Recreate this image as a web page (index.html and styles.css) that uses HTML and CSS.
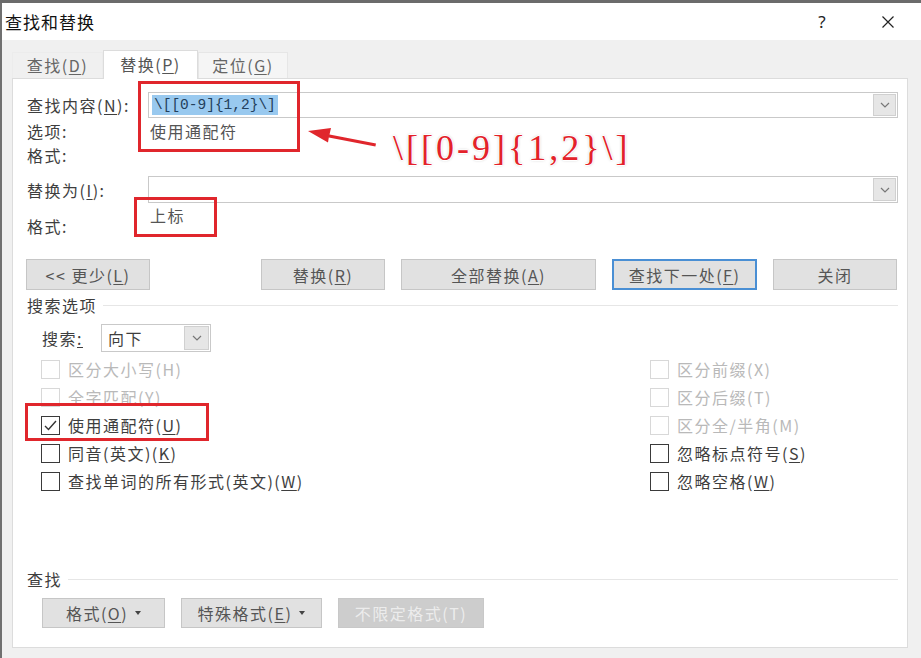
FILE: index.html
```html
<!DOCTYPE html>
<html lang="zh-CN">
<head>
    <meta charset="UTF-8">
    <meta name="viewport" content="width=device-width, initial-scale=1.0">
    <title>查找和替换</title>
    <link rel="stylesheet" href="styles.css">
</head>
<body>
    <div class="topbar"></div>
    <div class="window">
        <div class="titlebar">
            <span class="title">查找和替换</span>
            <span class="ctrl">?</span>
            <span class="ctrl">
                <svg width="12" height="12" viewBox="0 0 12 12"><path d="M0.5 0.5 L11.5 11.5 M11.5 0.5 L0.5 11.5" stroke="#222" stroke-width="1.2" fill="none"/></svg>
            </span>
        </div>

        <div class="client">
            <div class="tabs">
                <div class="tab tab-find">查找(<u>D</u>)</div>
                <div class="tab active tab-replace">替换(<u>P</u>)</div>
                <div class="tab tab-goto">定位(<u>G</u>)</div>
            </div>

            <div class="panel">
                <div class="field-row">
                    <label class="field-label">查找内容(<u>N</u>):</label>
                    <div class="combo">
                        <span class="combo-text"><span class="selected">\[[0-9]{1,2}\]</span></span>
                        <span class="combo-btn"><svg width="10" height="6" viewBox="0 0 10 6"><path d="M1 1 L5 5 L9 1" stroke="#777" stroke-width="1.2" fill="none"/></svg></span>
                    </div>
                </div>
                <div class="info-row first"><span class="field-label">选项:</span><span class="info-value">使用通配符</span></div>
                <div class="info-row"><span class="field-label">格式:</span></div>

                <div class="field-row replace">
                    <label class="field-label">替换为(<u>I</u>):</label>
                    <div class="combo">
                        <span class="combo-text"></span>
                        <span class="combo-btn"><svg width="10" height="6" viewBox="0 0 10 6"><path d="M1 1 L5 5 L9 1" stroke="#777" stroke-width="1.2" fill="none"/></svg></span>
                    </div>
                </div>
                <div class="format-row"><span class="field-label">格式:</span><span class="info-value">上标</span></div>

                <div class="actions">
                    <div class="btn less"><span>&lt;&lt; 更少(<u>L</u>)</span></div>
                    <div class="btn w-replace"><span>替换(<u>R</u>)</span></div>
                    <div class="btn w-all"><span>全部替换(<u>A</u>)</span></div>
                    <div class="btn w-next default"><span>查找下一处(<u>F</u>)</span></div>
                    <div class="btn w-close"><span>关闭</span></div>
                </div>

                <div class="group-head">搜索选项</div>

                <div class="search-row">
                    <span class="search-label">搜索<u>:</u></span>
                    <div class="select">
                        <span class="select-text">向下</span>
                        <span class="combo-btn"><svg width="10" height="6" viewBox="0 0 10 6"><path d="M1 1 L5 5 L9 1" stroke="#777" stroke-width="1.2" fill="none"/></svg></span>
                    </div>
                </div>

                <div class="checks">
                    <div class="check disabled"><span class="box"></span><span>区分大小写(H)</span></div>
                    <div class="check disabled"><span class="box"></span><span>区分前缀(X)</span></div>
                    <div class="check disabled"><span class="box"></span><span>全字匹配(Y)</span></div>
                    <div class="check disabled"><span class="box"></span><span>区分后缀(T)</span></div>
                    <div class="check"><span class="box"><svg width="13" height="11" viewBox="0 0 13 11"><path d="M1 6 L4.5 9.5 L12 1" stroke="#333" stroke-width="1.4" fill="none"/></svg></span><span>使用通配符(<u>U</u>)</span></div>
                    <div class="check disabled"><span class="box"></span><span>区分全/半角(M)</span></div>
                    <div class="check"><span class="box"></span><span>同音(英文)(<u>K</u>)</span></div>
                    <div class="check"><span class="box"></span><span>忽略标点符号(<u>S</u>)</span></div>
                    <div class="check"><span class="box"></span><span>查找单词的所有形式(英文)(<u>W</u>)</span></div>
                    <div class="check"><span class="box"></span><span>忽略空格(<u>W</u>)</span></div>
                </div>

                <div class="group-head find-head">查找</div>

                <div class="format-actions">
                    <div class="btn w-format"><span>格式(<u>O</u>)</span><span class="caret"></span></div>
                    <div class="btn w-special"><span>特殊格式(<u>E</u>)</span><span class="caret"></span></div>
                    <div class="btn w-noformat disabled"><span>不限定格式(T)</span></div>
                </div>
            </div>
        </div>
    </div>

    <!-- red annotations drawn on top of the dialog -->
    <div class="mark mark-find"></div>
    <div class="mark mark-format"></div>
    <div class="mark mark-wild"></div>
    <svg class="arrow" width="921" height="658" viewBox="0 0 921 658">
        <polygon points="308,131 331,128 329.5,134.6 376,143.5 375.4,146.6 328.8,137.6 328,142.6" fill="#e0262c"/>
    </svg>
    <div class="callout">\[[0-9]{1,2}\]</div>
</body>
</html>
```

FILE: styles.css
```css
body {
    margin: 0;
    width: 921px;
    height: 658px;
    overflow: hidden;
    position: relative;
    background-color: #f0f0f0;
    font-family: "Noto Sans CJK SC", sans-serif;
    color: #3e3e3e;
}
u {
    text-decoration-thickness: 1px;
    text-underline-offset: 2px;
}
.topbar {
    height: 3px;
    background-color: #6b6b6b;
}
.window {
    height: 655px;
    border-left: 2px solid #707070;
    display: flex;
    flex-direction: column;
}
.titlebar {
    height: 37px;
    flex: none;
    background-color: #fff;
    display: flex;
    align-items: center;
    padding-left: 3px;
}
.title {
    flex: 1;
    font-size: 17px;
    letter-spacing: 1px;
    color: #111;
}
.ctrl {
    width: 66px;
    display: flex;
    justify-content: center;
    font-family: "Noto Sans", sans-serif;
    font-size: 17px;
    color: #222;
}
.client {
    flex: 1;
    padding: 10px 0 0 10px;
}

/* tabs */
.tabs {
    height: 28px;
    display: flex;
    align-items: flex-end;
}
.tab {
    box-sizing: border-box;
    height: 26px;
    line-height: 24px;
    text-align: center;
    font-size: 16px;
    letter-spacing: 1.5px;
    color: #666;
    background-color: #f0f0f0;
    border: 1px solid #e6e6e6;
    border-bottom: none;
}
.tab-find {
    width: 91px;
    border-color: #ececec;
}
.tab-replace {
    width: 95px;
}
.tab-goto {
    width: 90px;
    background-color: #f5f5f5;
}
.tab.active {
    height: 29px;
    line-height: 27px;
    margin-bottom: -1px;
    position: relative;
    z-index: 1;
    background-color: #fff;
    border-color: #dcdcdc;
    color: #555;
}

/* main panel */
.panel {
    box-sizing: border-box;
    width: 896px;
    height: 570px;
    background-color: #fff;
    border: 1px solid #dcdcdc;
    padding: 13px 9px 0 14px;
}
.field-row {
    height: 26px;
    display: flex;
    align-items: center;
}
.field-row.replace {
    height: 27px;
    margin-top: 9px;
}
.field-label {
    width: 121px;
    flex: none;
    font-size: 16px;
    letter-spacing: 1.5px;
    line-height: 24px;
}
.combo {
    flex: 1;
    height: 100%;
    box-sizing: border-box;
    border: 1px solid #c9c9c9;
    padding: 1px;
    display: flex;
}
.combo-text {
    flex: 1;
    display: flex;
    align-items: center;
    padding-left: 2px;
}
.selected {
    background-color: #99c9ef;
    font-family: "Liberation Mono", monospace;
    font-size: 14.5px;
    line-height: 20px;
    padding: 0 2px;
    color: #23405c;
}
.combo-btn {
    width: 23px;
    box-sizing: border-box;
    background-color: #e6e6e6;
    border: 1px solid #d0d0d0;
    display: flex;
    align-items: center;
    justify-content: center;
}
.info-row {
    display: flex;
    line-height: 24px;
}
.info-row.first {
    margin-top: 1px;
}
.info-value {
    padding-left: 2px;
    font-size: 16px;
    letter-spacing: 1.5px;
    line-height: 24px;
    color: #555;
}
.format-row {
    display: flex;
    align-items: flex-start;
}
.format-row .field-label {
    padding-top: 11px;
}

/* buttons */
.actions {
    height: 31px;
    margin-top: 21px;
    margin-left: -1px;
    display: flex;
    gap: 16px;
}
.btn {
    box-sizing: border-box;
    height: 100%;
    display: flex;
    align-items: center;
    justify-content: center;
    background-color: #e1e1e1;
    border: 1px solid #c6c6c6;
    font-size: 16px;
    letter-spacing: 1.5px;
    color: #555;
}
.btn.less { width: 124px; margin-right: 95px; }
.btn.w-replace { width: 124px; }
.btn.w-all { width: 195px; }
.btn.w-next { width: 145px; }
.btn.w-close { width: 124px; }
.btn.default {
    border: 2px solid #4a8fd4;
}
.btn.w-format { width: 123px; }
.btn.w-special { width: 141px; }
.btn.w-noformat { width: 146px; }
.btn.disabled {
    background-color: #cdcdcd;
    border-color: #c8c8c8;
    color: #ececec;
}
.caret {
    margin-left: 7px;
    border-left: 3px solid transparent;
    border-right: 3px solid transparent;
    border-top: 4px solid #444;
}

/* group headers */
.group-head {
    margin-top: 3px;
    display: flex;
    align-items: center;
    gap: 6px;
    font-size: 16px;
    letter-spacing: 1.5px;
    line-height: 24px;
}
.group-head::after {
    content: "";
    flex: 1;
    height: 1px;
    background-color: #e6e6e6;
}
.find-head {
    margin-top: 72px;
}

/* search options */
.search-row {
    height: 28px;
    margin-top: 7px;
    padding-left: 15px;
    display: flex;
    align-items: center;
}
.search-label {
    width: 59px;
    font-size: 16px;
    letter-spacing: 1.5px;
}
.select {
    width: 110px;
    height: 28px;
    box-sizing: border-box;
    border: 1px solid #c9c9c9;
    padding: 1px;
    display: flex;
}
.select-text {
    flex: 1;
    padding-left: 5px;
    line-height: 24px;
    font-size: 16px;
    letter-spacing: 1.5px;
}
.select .combo-btn {
    width: 25px;
}
.checks {
    margin-top: 3px;
    padding-left: 14px;
    display: grid;
    grid-template-columns: 609px 1fr;
    grid-auto-rows: 28px;
}
.check {
    display: flex;
    align-items: center;
    gap: 8px;
    font-size: 16px;
    letter-spacing: 1.5px;
}
.box {
    width: 19px;
    height: 19px;
    flex: none;
    box-sizing: border-box;
    border: 1px solid #3a3a3a;
    display: flex;
    align-items: center;
    justify-content: center;
}
.check.disabled {
    color: #b9b9b9;
}
.check.disabled .box {
    border-color: #d8d8d8;
}
.format-actions {
    height: 30px;
    margin-top: 7px;
    padding-left: 15px;
    display: flex;
    gap: 16px;
}

/* annotations */
.mark {
    position: absolute;
    box-sizing: border-box;
    border: 3px solid #e0262c;
}
.mark-find {
    left: 138px;
    top: 81px;
    width: 162px;
    height: 71px;
}
.mark-format {
    left: 134px;
    top: 197px;
    width: 83px;
    height: 40px;
}
.mark-wild {
    left: 25px;
    top: 403px;
    width: 184px;
    height: 38px;
}
.arrow {
    position: absolute;
    left: 0;
    top: 0;
    pointer-events: none;
}
.callout {
    position: absolute;
    left: 393px;
    top: 126px;
    font-family: "Liberation Serif", serif;
    font-size: 36px;
    line-height: 44px;
    letter-spacing: 3px;
    color: #e3222a;
    text-shadow: 1px 0 0 #fff, -1px 0 0 #fff, 0 1px 0 #fff, 0 -1px 0 #fff,
                 0 0 3px #aaa;
}
```
